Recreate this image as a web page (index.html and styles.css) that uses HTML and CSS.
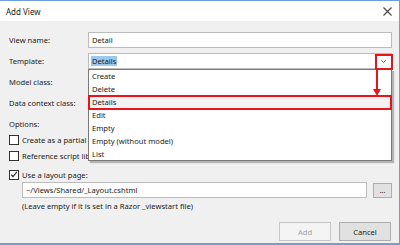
FILE: index.html
```html
<!DOCTYPE html>
<html>
<head>
<meta charset="utf-8">
<link rel="stylesheet" href="styles.css">
</head>
<body>
<div class="window">
  <div class="titlebar">
    <span class="title">Add View</span>
    <svg class="close" width="9" height="9" viewBox="0 0 9 9"><path d="M0.5 0.5L8.5 8.5M8.5 0.5L0.5 8.5" stroke="#444" stroke-width="1.1" fill="none"/></svg>
  </div>
  <div class="body">
    <div class="row">
      <span class="label">View name:</span>
      <div class="input">Detail</div>
    </div>
    <div class="row">
      <span class="label">Template:</span>
      <div class="input select"><span class="sel">Details</span>
        <svg class="chev" width="5" height="3" viewBox="0 0 5 3"><path d="M0.3 0.3L2.5 2.5L4.7 0.3" stroke="#555" stroke-width="0.9" fill="none"/></svg>
      </div>
    </div>
    <div class="row"><span class="label">Model class:</span></div>
    <div class="row"><span class="label">Data context class:</span></div>
    <div class="row options"><span class="label">Options:</span></div>
    <div class="check"><span class="box"></span><span>Create as a partial</span></div>
    <div class="check"><span class="box"></span><span>Reference script lib</span></div>
    <div class="check layout"><span class="box"><svg width="9" height="9" viewBox="0 0 9 9"><path d="M1.2 4.6L3.4 7L7.8 1.4" stroke="#222" stroke-width="1.3" fill="none"/></svg></span><span>Use a layout page:</span></div>
    <div class="pathrow">
      <div class="input path">~/Views/Shared/_Layout.cshtml</div>
      <div class="btn dots">...</div>
    </div>
    <div class="hint">(Leave empty if it is set in a Razor _viewstart file)</div>
    <div class="buttons">
      <div class="btn add">Add</div>
      <div class="btn cancel">Cancel</div>
    </div>
  </div>

  <ul class="dropdown">
    <li>Create</li>
    <li>Delete</li>
    <li class="hl">Details</li>
    <li>Edit</li>
    <li>Empty</li>
    <li>Empty (without model)</li>
    <li>List</li>
  </ul>
  <div class="redbox"></div>
  <div class="redline"></div>
  <svg class="redhead" width="8" height="7" viewBox="0 0 8 7"><path d="M0 0H8L4 7Z" fill="#e8141c"/></svg>
</div>
</body>
</html>
```
FILE: styles.css
```css
* { box-sizing: border-box; }
html, body { margin: 0; padding: 0; }
body {
  width: 400px;
  height: 245px;
  overflow: hidden;
  background: #fff;
  font-family: "Noto Sans", "DejaVu Sans", sans-serif;
  font-size: 7.6px;
  color: #1a1a1a;
}
.window {
  position: relative;
  width: 400px;
  height: 245px;
  border-top: 1px solid #6e9fd8;
  border-right: 1px solid #6e9fd8;
  border-bottom: 2px solid #6e9fd8;
  display: flex;
  flex-direction: column;
}
.titlebar {
  height: 20px;
  background: #fff;
  display: flex;
  align-items: center;
  justify-content: space-between;
  padding: 0 6px 0 6px;
  flex: none;
}
.title { font-size: 8px; color: #222; }
.close { margin-right: 1px; }
.body {
  flex: 1;
  background: #f0f0f0;
  padding: 11px 7px 0 9px;
  display: flex;
  flex-direction: column;
}
.row {
  display: flex;
  align-items: center;
  height: 16px;
  margin-bottom: 5px;
}
.row.options { margin-bottom: 2px; }
.label { width: 79px; flex: none; }
.input {
  flex: 1;
  height: 16px;
  background: #fff;
  border: 1px solid #bcbcbc;
  display: flex;
  align-items: center;
  padding-left: 3px;
}
.select { position: relative; }
.sel { background: #99c9ef; padding: 0 1px; margin-left: -1px; }
.chev { position: absolute; right: 5px; top: 6px; }
.check {
  display: flex;
  align-items: center;
  height: 11px;
  margin-bottom: 5px;
  gap: 3px;
}
.check.layout { margin-top: 3px; margin-bottom: 2px; }
.box {
  width: 10px;
  height: 10px;
  border: 1px solid #333;
  background: #fff;
  flex: none;
  display: flex;
  align-items: center;
  justify-content: center;
}
.pathrow {
  display: flex;
  align-items: center;
  margin-left: 13px;
  height: 16px;
  gap: 6px;
}
.path { flex: 1; height: 16px; }
.btn {
  display: flex;
  align-items: center;
  justify-content: center;
  border: 1px solid #adadad;
  background: #e1e1e1;
}
.dots { width: 19px; height: 15px; font-size: 7px; }
.hint { margin: 2px 0 0 13px; height: 12px; display: flex; align-items: center; }
.buttons {
  display: flex;
  justify-content: flex-end;
  gap: 8px;
  margin-top: 10px;
  padding-right: 1px;
}
.buttons .btn { width: 52px; height: 19px; }
.add { background: #f4f4f4; border-color: #c6c6c6; color: #a3a3a3; }
.cancel { background: #e1e1e1; border-color: #adadad; }

.dropdown {
  position: absolute;
  left: 88px;
  top: 68px;
  width: 304px;
  height: 92px;
  margin: 0;
  padding: 0;
  list-style: none;
  background: #fff;
  border: 1px solid #7a7a7a;
  box-shadow: 2px 2px 1px rgba(0,0,0,0.25);
}
.dropdown li {
  height: 13px;
  line-height: 12px;
  padding-left: 3px;
}
.dropdown li.hl { background: #f2f2f2; outline: 2px solid #e8141c; outline-offset: -1px; }
.redbox {
  position: absolute;
  left: 375px;
  top: 53px;
  width: 18px;
  height: 16px;
  border: 2px solid #e8141c;
}
.redline {
  position: absolute;
  left: 376px;
  top: 69px;
  width: 2px;
  height: 20px;
  background: #e8141c;
}
.redhead {
  position: absolute;
  left: 373px;
  top: 88px;
}
```
